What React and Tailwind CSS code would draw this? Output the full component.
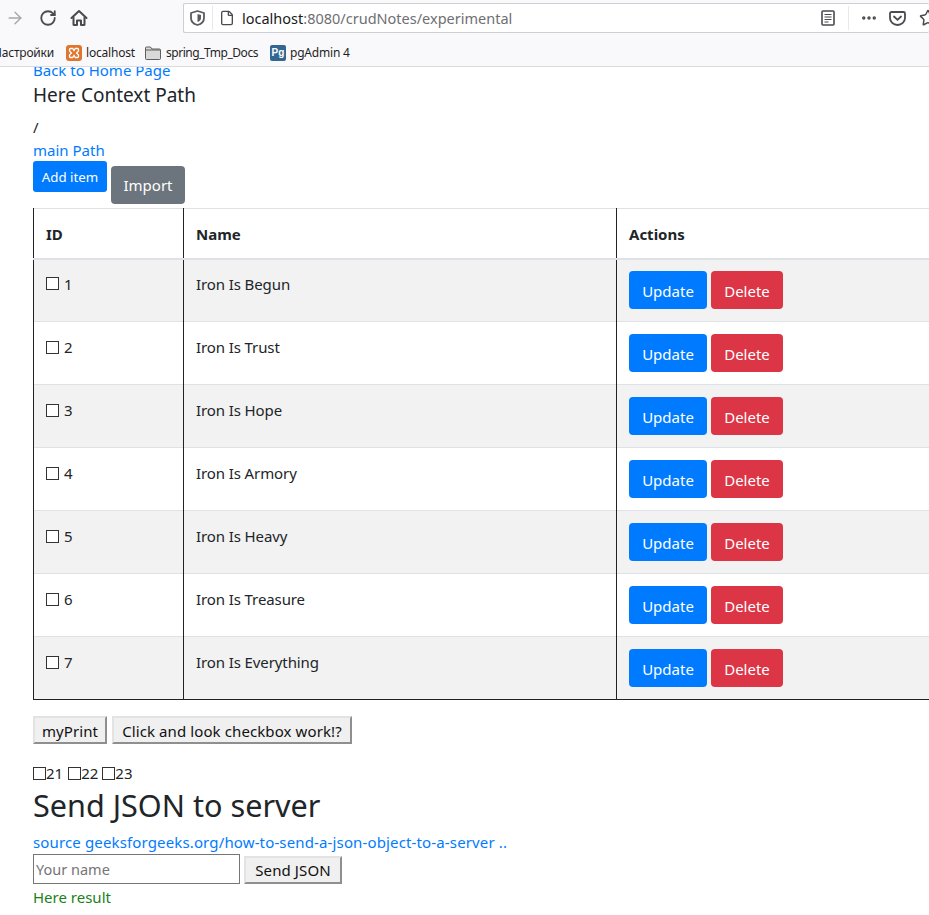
import { RotateCw, MoreHorizontal, Star, File, ArrowRight } from "lucide-react";

const rows = [
  [1, "Iron Is Begun"],
  [2, "Iron Is Trust"],
  [3, "Iron Is Hope"],
  [4, "Iron Is Armory"],
  [5, "Iron Is Heavy"],
  [6, "Iron Is Treasure"],
  [7, "Iron Is Everything"],
];

function Check() {
  return <input type="checkbox" className="m-0 h-[13px] w-[13px] appearance-none border border-[#333] bg-white" />;
}

function NativeButton({ children, className }) {
  return (
    <button className={"h-[28px] border-2 border-t-[#e3e3e3] border-l-[#e3e3e3] border-r-[#8f8f8f] border-b-[#8f8f8f] bg-[#f0f0f0] text-[15px] leading-[22px] tracking-[0.1px] text-[#111] " + className}>
      {children}
    </button>
  );
}

function Browser() {
  return (
    <header className="h-[67px] shrink-0 border-b border-[#dcdcde] bg-[#f9f9fb] font-['Noto_Sans',sans-serif]">
      <div className="flex h-[36px] items-center">
        <ArrowRight size={20} strokeWidth={1.6} className="ml-[5px] text-[#a6a6a8]" />
        <RotateCw size={18} strokeWidth={2.4} className="ml-[14px] text-[#4a4a4f]" />
        <svg width="18" height="18" viewBox="0 0 18 18" className="ml-[13px] text-[#4a4a4f]" fill="none" stroke="currentColor" strokeWidth="2" strokeLinejoin="round">
          <path d="M1.500 9 9 2l7.500 7" strokeLinecap="round" />
          <path d="M3.500 8v7.500a.5.5 0 0 0 .5.5h3v-4.500h4V16h3a.5.5 0 0 0 .5-.5V8" />
        </svg>
        <div className="ml-[95px] flex h-[30px] grow items-center rounded-[2px] border border-[#cfcfd1] border-r-0 bg-white">
          <svg width="15" height="16" viewBox="0 0 15 16" className="ml-[6px] text-[#5b5b5f]">
            <path d="M7.500 1 14 3v5c0 3.500-2.700 6-6.500 7C3.700 14 1 11.500 1 8V3Z" fill="none" stroke="currentColor" strokeWidth="1.800" strokeLinejoin="round" />
            <path d="M7.500 4 11 5v3c0 2-1.500 3.500-3.500 4Z" fill="currentColor" />
          </svg>
          <span className="ml-[7px] h-[24px] w-px bg-[#e8e8ea]" />
          <File size={16} strokeWidth={2} className="ml-[6px] text-[#4a4a4f]" />
          <span className="ml-[7px] pt-px text-[14.5px] text-[#1a1a1a]">
            localhost<span className="text-[#6f6f73]">:8080/crudNotes/experimental</span>
          </span>
          <div className="ml-auto flex items-center">
            <svg width="14" height="16" viewBox="0 0 14 16" className="text-[#4a4a4f]" fill="none" stroke="currentColor">
              <rect x="1" y="1" width="12" height="14" rx="1" strokeWidth="1.6" />
              <path d="M3.5 4.5h7M3.5 7h7M3.5 9.5h7M3.5 12h4" strokeWidth="1.1" />
            </svg>
            <span className="ml-[13px] h-[24px] w-px bg-[#e8e8ea]" />
            <MoreHorizontal size={18} strokeWidth={2.6} className="ml-[11px] text-[#4a4a4f]" />
            <svg width="17" height="15" viewBox="0 0 17 15" className="ml-[11px] text-[#4a4a4f]" fill="none" stroke="currentColor" strokeWidth="1.8">
              <path d="M2.5 1h12A1.5 1.5 0 0 1 16 2.5V7a7.5 7 0 0 1-15 0V2.5A1.5 1.5 0 0 1 2.5 1Z" />
              <path d="M5 5.5l3.500 3.300 3.500-3.300" strokeLinecap="round" />
            </svg>
            <Star size={18} strokeWidth={2} className="ml-[13px] mr-[-8px] text-[#4a4a4f]" />
          </div>
        </div>
      </div>
      <div className="flex h-[30px] items-center pt-[4px] text-[12px] text-[#1f1f1f]">
        <span className="ml-[-7px] tracking-[-0.2px]">Настройки</span>
        <svg width="16" height="16" viewBox="0 0 16 16" className="ml-[12px]">
          <rect width="16" height="16" rx="3" fill="#e0752d" />
          <path d="M4.500 3.500h2.200L8 5.500l1.300-2h2.200a1 1 0 0 1 1 1v1.500L10.500 8l2 2v1.500a1 1 0 0 1-1 1H9.300L8 10.500l-1.300 2H4.500a1 1 0 0 1-1-1V10l2-2-2-2V4.500a1 1 0 0 1 1-1Z" fill="none" stroke="#fff" strokeWidth="1.3" />
        </svg>
        <span className="ml-[4px] tracking-[-0.2px]">localhost</span>
        <svg width="16" height="14" viewBox="0 0 16 14" className="ml-[10px]">
          <path d="M.5 2A1 1 0 0 1 1.500 1h4l1.500 2h7.500a1 1 0 0 1 1 1v8.500a1 1 0 0 1-1 1h-13a1 1 0 0 1-1-1Z" fill="#d8d8d8" stroke="#5e5e5e" />
          <path d="M1 4h14" stroke="#5e5e5e" />
        </svg>
        <span className="ml-[5px] tracking-[-0.45px]">spring_Tmp_Docs</span>
        <span className="ml-[12px] flex h-[16px] w-[16px] items-center justify-center rounded-[2px] bg-[#336791] font-['Liberation_Sans',sans-serif] text-[10px] font-bold leading-none text-white">Pg</span>
        <span className="ml-[4px] tracking-[-0.2px]">pgAdmin 4</span>
      </div>
    </header>
  );
}

export default function App() {
  return (
    <div className="flex h-[915px] w-[929px] flex-col overflow-hidden bg-white">
      <Browser />
      <main className="min-h-0 grow overflow-hidden pl-[33px] font-['Noto_Sans',sans-serif] text-[15px] leading-[24px] text-[#212529]">
        <div className="mt-[-8px] w-[1000px]">
          <a className="block -translate-y-px text-[#007bff]">Back to Home Page</a>
          <h5 className="mb-[8px] text-[19px] leading-[24px]">Here Context Path</h5>
          <p>/</p>
          <a className="block -translate-y-px text-[#007bff]">main Path</a>
          <div className="flex items-start gap-[4px]">
            <button className="mt-[-2px] h-[31px] w-[74px] rounded-[3px] bg-[#007bff] text-[13.3px] text-white">Add item</button>
            <button className="mt-[3px] h-[38px] w-[74px] rounded-[4px] bg-[#6c757d] text-[15px] text-white">Import</button>
          </div>
          <table className="mt-[4px] w-[1000px] table-fixed border-collapse">
            <colgroup>
              <col className="w-[150px]" />
              <col className="w-[433px]" />
              <col />
            </colgroup>
            <thead>
              <tr className="h-[50px] border-t border-b-2 border-t-[#dee2e6] border-b-[#dee2e6] font-bold">
                <th className="border-l border-[#222] border-b-[#dee2e6] border-t-[#dee2e6] px-[12px] pt-[2px] text-left">ID</th>
                <th className="border-l border-[#222] border-b-[#dee2e6] border-t-[#dee2e6] px-[12px] pt-[2px] text-left">Name</th>
                <th className="border-l border-[#222] border-b-[#dee2e6] border-t-[#dee2e6] px-[12px] pt-[2px] text-left">Actions</th>
              </tr>
            </thead>
            <tbody>
              {rows.map(([id, name]) => (
                <tr key={id} className={"h-[63px] border-b " + (id === 7 ? "border-b-[#222]" : "border-b-[#dee2e6]") + (id % 2 ? " bg-[#f2f2f2]" : "")}>
                  <td className={"border-l border-l-[#222] px-[12px] align-top " + (id === 1 ? "pt-[12px]" : "pt-[13px]")}>
                    <span className="flex items-center">
                      <Check />
                      <span className="ml-[5px]">{id}</span>
                    </span>
                  </td>
                  <td className={"border-l border-l-[#222] px-[12px] align-top tracking-[-0.1px] " + (id === 1 ? "pt-[12px]" : "pt-[13px]")}>{name}</td>
                  <td className={"border-l border-l-[#222] px-[12px] align-top " + (id === 1 ? "pt-[11px]" : "pt-[12px]")}>
                    <div className="flex gap-[4px]">
                      <button className={"h-[38px] w-[78px] rounded-[4px] bg-[#007bff] text-white " + (id === 1 ? "pt-[2px]" : "pt-px")}>Update</button>
                      <button className={"h-[38px] w-[72px] rounded-[4px] bg-[#dc3545] text-white " + (id === 1 ? "pt-[2px]" : "pt-px")}>Delete</button>
                    </div>
                  </td>
                </tr>
              ))}
            </tbody>
          </table>
          <div className="mt-[16px] flex gap-[5px]">
            <NativeButton className="w-[74px] pt-[2px]">myPrint</NativeButton>
            <NativeButton className="w-[240px] pt-[2px]">Click and look checkbox work!?</NativeButton>
          </div>
          <div className="mt-[17px] flex items-center">
            <Check /><span className="mr-[5px]">21</span>
            <Check /><span className="mr-[4px]">22</span>
            <Check /><span>23</span>
          </div>
          <h2 className="mb-[6px] mt-[1px] text-[30.6px] leading-[38px]">Send JSON to server</h2>
          <a className="block tracking-[0.14px] text-[#007bff]">source geeksforgeeks.org/how-to-send-a-json-object-to-a-server ..</a>
          <div className="flex items-end gap-[4px]">
            <input placeholder="Your name" className="h-[30px] w-[207px] border border-[#767676] px-[2px] text-[14.5px] text-[#111] outline-none placeholder:text-[#757575]" />
            <NativeButton className="w-[98px]">Send JSON</NativeButton>
          </div>
          <div className="pt-px text-[#1a7f1a]">Here result</div>
        </div>
      </main>
    </div>
  );
}
